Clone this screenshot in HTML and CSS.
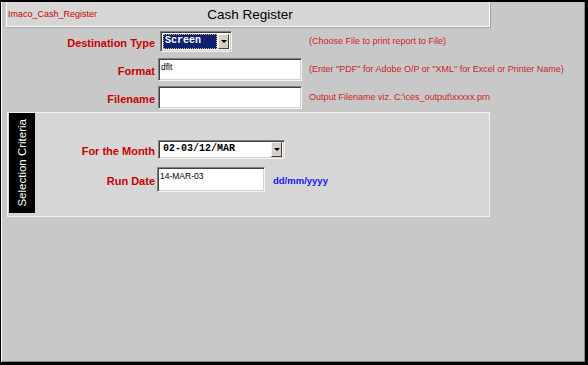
FILE: index.html
```html
<!DOCTYPE html>
<html lang="en">
<head>
  <meta charset="UTF-8">
  <title>Cash Register</title>
  <link rel="stylesheet" href="styles.css">
</head>
<body>
  <div class="ventana">
    <div class="cabecera">
      <span class="app-nombre">Imaco_Cash_Register</span>
      <span class="titulo">Cash Register</span>
      <span></span>
    </div>

    <div class="formulario">
      <label class="etiqueta">Destination Type</label>
      <div class="combo combo-destino">
        <span class="combo-valor">Screen</span>
        <span class="combo-boton"></span>
      </div>
      <span class="ayuda">(Choose File to print report to File)</span>

      <label class="etiqueta">Format</label>
      <div class="caja">dflt</div>
      <span class="ayuda">(Enter "PDF" for Adobe O/P or "XML" for Excel or Printer Name)</span>

      <label class="etiqueta">Filename</label>
      <div class="caja"></div>
      <span class="ayuda">Output Filename viz. C:\ces_output\xxxxx.prn</span>
    </div>

    <div class="criterios">
      <div class="criterios-tab"><span>Selection Criteria</span></div>
      <div class="criterios-cuerpo">
        <label class="etiqueta">For the Month</label>
        <div class="campo">
          <div class="combo combo-mes">
            <span class="combo-valor">02-03/12/MAR</span>
            <span class="combo-boton"></span>
          </div>
        </div>

        <label class="etiqueta">Run Date</label>
        <div class="campo">
          <div class="caja caja-fecha">14-MAR-03</div>
          <span class="formato-fecha">dd/mm/yyyy</span>
        </div>
      </div>
    </div>
  </div>
</body>
</html>
```

FILE: styles.css
```css
body {
  margin: 0;
  padding: 0;
  font-family: 'Liberation Sans', Arial, sans-serif;
  background-color: #c8c8c8;
}

.ventana {
  width: 588px;
  height: 365px;
  box-sizing: border-box;
  background-color: #c8c8c8;
  border-style: solid;
  border-color: black;
  border-width: 2px 3px 3px 1px;
  box-shadow: inset 1px 0 white, inset -1px -1px #8a8a8a;
}

/* cabecera */
.cabecera {
  margin-left: 5px;
  width: 484px;
  height: 25px;
  box-sizing: border-box;
  background-color: #d6d6d6;
  border: 1px solid white;
  border-top: none;
  box-shadow: 1px 1px #a4a4a4;
  display: grid;
  grid-template-columns: 1fr auto 1fr;
  align-items: center;
}

.app-nombre {
  font-size: 9px;
  color: #d00000;
  padding-left: 1px;
  align-self: start;
  margin-top: 7px;
}

.titulo {
  font-size: 13.5px;
  color: black;
  margin-left: 4px;
}

/* filas del formulario */
.formulario {
  display: grid;
  grid-template-columns: 154px 147px auto;
  grid-auto-rows: 24px;
  row-gap: 4px;
  align-items: center;
  padding-top: 2px;
}

.etiqueta {
  font-size: 11px;
  font-weight: bold;
  color: #c80000;
  text-align: right;
  padding-top: 3px;
}

.ayuda {
  font-size: 9px;
  color: #cc1f1f;
  margin-left: 7px;
  white-space: nowrap;
}

.formulario .caja {
  width: 144px;
  margin-left: 3px;
}

.caja {
  height: 23px;
  box-sizing: border-box;
  background-color: white;
  border: 1px solid;
  border-color: #808080 #f4f4f4 #f4f4f4 #808080;
  box-shadow: inset 1px 1px #404040, inset -1px -1px #d4d0c8;
  font-size: 8.5px;
  padding: 3px 0 0 2px;
  color: black;
}

.combo {
  height: 21px;
  box-sizing: border-box;
  background-color: white;
  border: 1px solid;
  border-color: #808080 #f4f4f4 #f4f4f4 #808080;
  box-shadow: inset 1px 1px #404040, inset -1px -1px #d4d0c8;
  display: flex;
  align-items: stretch;
  padding: 2px;
}

.combo-valor {
  flex: 1;
  font-family: 'Liberation Mono', 'Courier New', monospace;
  font-size: 10px;
  font-weight: bold;
  padding-left: 2px;
  line-height: 14px;
}

.combo-boton {
  width: 11px;
  box-sizing: border-box;
  background-color: #d4d0c8;
  border: 1px solid;
  border-color: #f4f4f4 #404040 #404040 #f4f4f4;
  display: flex;
  align-items: center;
  justify-content: center;
}

.combo-boton::after {
  content: "";
  border-left: 3px solid transparent;
  border-right: 3px solid transparent;
  border-top: 3px solid black;
}

.combo-destino {
  width: 72px;
  margin-left: 5px;
}

.combo-destino .combo-valor {
  background-color: #0d2170;
  color: white;
  outline: 1px dotted #c8b060;
  outline-offset: -1px;
  margin-right: 1px;
}

/* panel de criterios */
.criterios {
  margin-top: 3px;
  margin-left: 6px;
  width: 483px;
  height: 105px;
  box-sizing: border-box;
  background-color: #d6d6d6;
  border: 1px solid #f2f2f2;
  display: flex;
  align-items: flex-start;
}

.criterios-tab {
  width: 26px;
  height: 100px;
  margin-left: 1px;
  background-color: black;
  color: white;
  display: flex;
  align-items: center;
  justify-content: center;
}

.criterios-tab span {
  writing-mode: vertical-rl;
  transform: rotate(180deg);
  font-size: 11.5px;
  white-space: nowrap;
}

.criterios-cuerpo {
  display: grid;
  grid-template-columns: 120px auto;
  grid-template-rows: 24px 24px;
  row-gap: 6px;
  align-items: center;
  padding-top: 24px;
}

.campo {
  display: flex;
  align-items: center;
}

.combo-mes {
  width: 127px;
  height: 19px;
  margin-left: 3px;
  padding: 1px 2px;
}

.caja-fecha {
  width: 108px;
  height: 25px;
  margin-left: 2px;
}

.formato-fecha {
  font-size: 9.5px;
  font-weight: bold;
  color: #1414f0;
  margin-left: 8px;
  padding-top: 3px;
}
```
